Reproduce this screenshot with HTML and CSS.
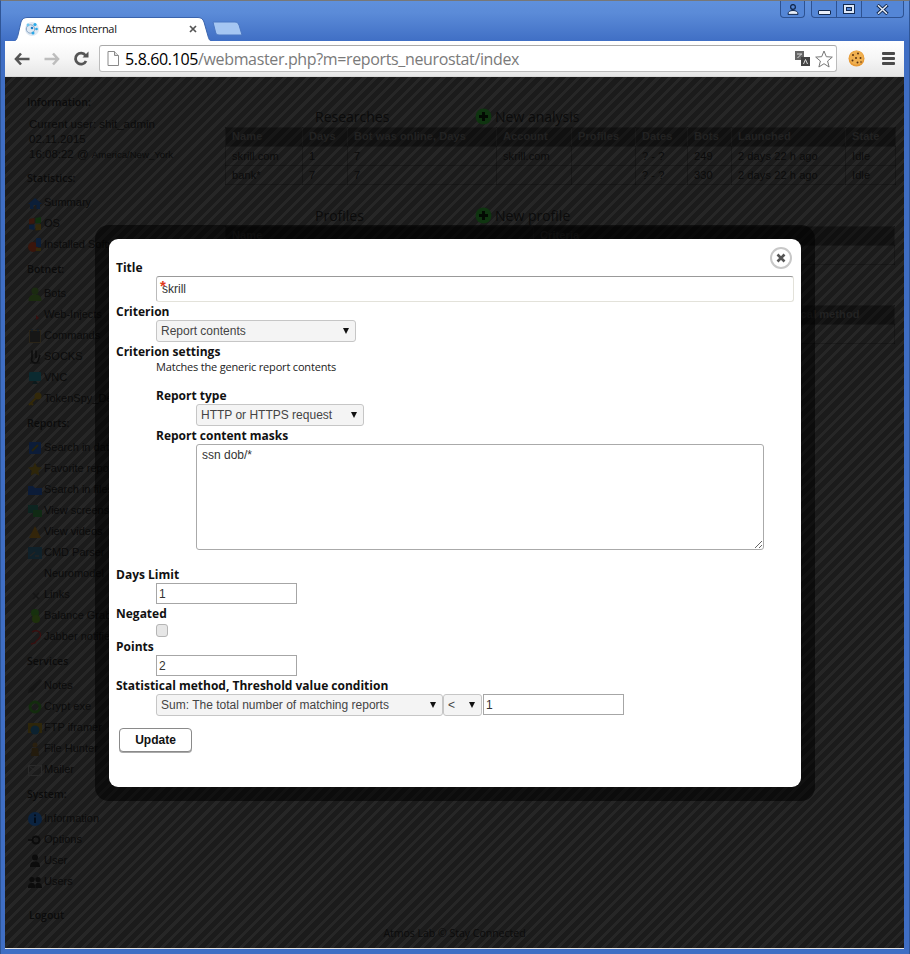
FILE: index.html
```html
<!DOCTYPE html>
<html lang="en">
<head>
<meta charset="utf-8">
<title>Atmos Internal</title>
<link rel="stylesheet" href="styles.css">
</head>
<body>
<svg class="sprite" aria-hidden="true">
  <symbol id="i-home" viewBox="0 0 16 16"><path d="M8 3 L15 9 L13 9 L13 14 L9.500 14 L9.500 10 L6.500 10 L6.500 14 L3 14 L3 9 L1 9 Z" fill="#0b1e38"/></symbol>
  <symbol id="i-os" viewBox="0 0 16 16"><path d="M2 3 L7.500 2 L7.500 7.500 L2 8 Z" fill="#3a170c"/><path d="M8.500 2 L14 1 L14 7 L8.500 7.500 Z" fill="#10300f"/><path d="M2 9 L7.500 8.500 L7.500 14 L2 13 Z" fill="#0b1e38"/><path d="M8.500 8.500 L14 8 L14 14 L8.500 14.500 Z" fill="#33290a"/></symbol>
  <symbol id="i-soft" viewBox="0 0 16 16"><circle cx="6" cy="10" r="5" fill="#3a150b"/><rect x="9" y="1" width="5" height="9" rx="1" fill="#0b1e38"/><rect x="9" y="11" width="5" height="3" fill="#33290a"/></symbol>
  <symbol id="i-bots" viewBox="0 0 16 16"><circle cx="8" cy="5" r="3.500" fill="#1a2a10"/><path d="M1.500 15 C1.500 10 4 8.500 8 8.500 C12 8.500 14.500 10 14.500 15 Z" fill="#1b2c0f"/></symbol>
  <symbol id="i-dot" viewBox="0 0 16 16"><path d="M9 8 L12 11 L9 13 Z" fill="#3a0f0f"/></symbol>
  <symbol id="i-cmds" viewBox="0 0 16 16"><rect x="2.500" y="2.500" width="11" height="12" fill="#161616" stroke="#2a2418"/><path d="M5 1 L5 4 M11 1 L11 4" stroke="#0d1d2d"/></symbol>
  <symbol id="i-socks" viewBox="0 0 16 16"><path d="M5 1.500 L5 9 A3 3 0 0 0 11 12 L13 6 M9 1.500 L9 9" fill="none" stroke="#0c0c0c" stroke-width="1.500"/><path d="M3 14 L13 14" stroke="#101010"/></symbol>
  <symbol id="i-vnc" viewBox="0 0 16 16"><rect x="2" y="2" width="12" height="9" rx="1" fill="#0b2a30"/><path d="M5 14 L11 14 L9 11 L7 11 Z" fill="#0d1a1c"/></symbol>
  <symbol id="i-key" viewBox="0 0 16 16"><circle cx="11" cy="5" r="3.500" fill="#33290a"/><path d="M8.500 7.500 L2 14 M4 12 L6 14" stroke="#33290a" stroke-width="2.200" fill="none"/></symbol>
  <symbol id="i-db" viewBox="0 0 16 16"><rect x="2" y="2" width="12" height="12" rx="1" fill="#0c1c38"/><path d="M5 11 L11 5" stroke="#26240f" stroke-width="2"/></symbol>
  <symbol id="i-star" viewBox="0 0 16 16"><path d="M8 1.500 L10 6 L15 6.500 L11.300 9.800 L12.300 14.800 L8 12.200 L3.700 14.800 L4.700 9.800 L1 6.500 L6 6 Z" fill="#2e260a"/></symbol>
  <symbol id="i-files" viewBox="0 0 16 16"><path d="M1 4 L6 4 L8 6 L15 6 L15 13 L1 13 Z" fill="#0c1c38"/></symbol>
  <symbol id="i-screens" viewBox="0 0 16 16"><rect x="1" y="2" width="10" height="8" fill="#0d2420"/><rect x="6" y="7" width="9" height="7" fill="#102a14"/></symbol>
  <symbol id="i-video" viewBox="0 0 16 16"><path d="M8 2 L14 14 L2 14 Z" fill="#33250a"/></symbol>
  <symbol id="i-cmd" viewBox="0 0 16 16"><rect x="1" y="2" width="14" height="12" fill="#10212a"/><path d="M3 11 L8 7 M8 11 L12 11" stroke="#232323" stroke-width="1.500"/></symbol>
  <symbol id="i-links" viewBox="0 0 16 16"><path d="M6 6 L12 12 M12 6 L6 12" stroke="#151515" stroke-width="1.500"/></symbol>
  <symbol id="i-money" viewBox="0 0 16 16"><circle cx="8" cy="5" r="4" fill="#16300e"/><circle cx="9" cy="11" r="4" fill="#1e300c"/></symbol>
  <symbol id="i-jabber" viewBox="0 0 16 16"><path d="M5 3 C10 0 15 3 13 8 C12 11 9 11 8 14 L4 15" fill="none" stroke="#3a0f0f" stroke-width="1.300"/></symbol>
  <symbol id="i-notes" viewBox="0 0 16 16"><path d="M13 1 L15 3 L5 14 L1 15 L2 11 Z" fill="#151515"/></symbol>
  <symbol id="i-crypt" viewBox="0 0 16 16"><circle cx="8" cy="8" r="5" fill="none" stroke="#132c0e" stroke-width="2.800"/></symbol>
  <symbol id="i-ftp" viewBox="0 0 16 16"><path d="M1 3 L15 3 L15 13 L1 13 Z" fill="#2e260a"/><circle cx="8" cy="10" r="4.500" fill="#0c2230"/></symbol>
  <symbol id="i-hunter" viewBox="0 0 16 16"><circle cx="8" cy="4" r="2.500" fill="#2a2010"/><path d="M5 7 L11 7 L12 15 L4 15 Z" fill="#231b0d"/></symbol>
  <symbol id="i-mail" viewBox="0 0 16 16"><rect x="1.500" y="3.500" width="13" height="10" fill="none" stroke="#2a2a2a"/><path d="M1.500 3.500 L8 9 L14.500 3.500" fill="none" stroke="#2a2a2a"/></symbol>
  <symbol id="i-info" viewBox="0 0 16 16"><circle cx="8" cy="8" r="7" fill="#0b2340"/><path d="M8 6.500 L8 12" stroke="#030b16" stroke-width="2"/><circle cx="8" cy="4.300" r="1" fill="#030b16"/></symbol>
  <symbol id="i-opts" viewBox="0 0 16 16"><circle cx="9" cy="8" r="3.500" fill="none" stroke="#0b0b0b" stroke-width="2"/><path d="M1 8 L5 8" stroke="#0b0b0b" stroke-width="1.500"/></symbol>
  <symbol id="i-user" viewBox="0 0 16 16"><circle cx="8" cy="4.500" r="3" fill="#0c0c0c"/><path d="M3 14 C3 10 5 8.500 8 8.500 C11 8.500 13 10 13 14 Z" fill="#0c0c0c"/></symbol>
  <symbol id="i-users" viewBox="0 0 16 16"><circle cx="5" cy="5.500" r="2.600" fill="#0c0c0c"/><circle cx="11" cy="5.500" r="2.600" fill="#0c0c0c"/><path d="M1 14 C1 10 2.500 9 5 9 C7.500 9 8 10 8 14 Z M8.500 14 C8.500 10 9 9 11 9 C13.500 9 15 10 15 14 Z" fill="#0c0c0c"/></symbol>
</svg>
<div class="window">
  <header class="titlebar">
    <div class="tabstrip">
      <div class="tab">
        <svg class="tab-shape" width="202" height="25" viewBox="0 0 202 25"><path d="M0 24.500 C4 24.500 5 22 6 18 L9 5 C10 2 12 .5 15 .5 L186 .5 C189 .5 191 2 192 5 L196 19 C197 23 198 24.500 202 24.500 Z" fill="#fff" stroke="#3a64ad" stroke-width="1"/></svg>
        <svg class="favicon" width="16" height="16" viewBox="0 0 16 16"><circle cx="8" cy="8" r="7" fill="#dfe9f3"/><circle cx="6.500" cy="8" r="4.200" fill="none" stroke="#8aa6c4"/><circle cx="11" cy="3.500" r="1.600" fill="#29a9e8"/><circle cx="4" cy="4" r="1.400" fill="#6ec6f0"/><circle cx="12.500" cy="8" r="1.300" fill="#29a9e8"/><circle cx="9" cy="12" r="1.500" fill="#29a9e8"/><circle cx="8" cy="7" r="1.300" fill="#1e7fc8"/></svg>
        <span class="tab-title">Atmos Internal</span>
        <svg class="tab-close" width="8" height="8" viewBox="0 0 8 8"><path d="M1 1 L7 7 M7 1 L1 7" stroke="#555" stroke-width="1.700"/></svg>
      </div>
      <svg class="newtab" width="31" height="15" viewBox="0 0 31 15"><path d="M1 1 L23 1 C25 1 26 2 27 4 L30 14 L7 14 C5 14 4 13 3.500 11 Z" fill="#a5c6f2" stroke="#4a76c2"/></svg>
    </div>
    <div class="winctl">
      <div class="winbtn winbtn-user"><svg width="12" height="11" viewBox="0 0 12 11"><circle cx="6" cy="3" r="2.400" fill="none" stroke="#12294f" stroke-width="1.300"/><path d="M1 10.400 C1 7.500 3 6.500 6 6.500 C9 6.500 11 7.500 11 10.400 Z" fill="#e8eef8" stroke="#12294f"/></svg></div>
      <div class="wingroup">
        <div class="winbtn winbtn-min"><span class="glyph-min"></span></div>
        <div class="winbtn winbtn-max"><span class="glyph-max"></span></div>
        <div class="winbtn winbtn-close"><svg width="13" height="11" viewBox="0 0 13 11"><path d="M1.500 1 L11.500 10 M11.500 1 L1.500 10" stroke="#12294f" stroke-width="3.400"/><path d="M2 1.300 L11 9.700 M11 1.300 L2 9.700" stroke="#e8eef8" stroke-width="1.500"/></svg></div>
      </div>
    </div>
  </header>

  <div class="toolbar">
    <svg class="tool" width="16" height="14" viewBox="0 0 16 14"><path d="M7 1.500 L2 7 L7 12.500 M2.500 7 L15.500 7" fill="none" stroke="#555" stroke-width="2.600"/></svg>
    <svg class="tool tool-fwd" width="16" height="14" viewBox="0 0 16 14"><path d="M9 1.500 L14 7 L9 12.500 M13.500 7 L0.500 7" fill="none" stroke="#bdbdbd" stroke-width="2.600"/></svg>
    <svg class="tool tool-reload" width="16" height="16" viewBox="0 0 16 16"><path d="M13 10 A5.500 5.500 0 1 1 12.500 4.500" fill="none" stroke="#555" stroke-width="2.800"/><path d="M9.500 6.500 L15.500 6.500 L15.500 0.500 Z" fill="#555"/></svg>
    <div class="omnibox">
      <svg class="pageicon" width="12" height="15" viewBox="0 0 12 15"><path d="M1 .5 L7.500 .5 L11.500 4.500 L11.500 14.500 L1 14.500 Z" fill="#fff" stroke="#8a8a8a"/><path d="M7.500 .5 L7.500 4.500 L11.500 4.500" fill="#ddd" stroke="#8a8a8a"/></svg>
      <span class="url"><span class="url-host">5.8.60.105</span>/webmaster.php?m=reports_neurostat/index</span>
      <svg class="translate" width="15" height="15" viewBox="0 0 15 15"><rect x="0" y="0" width="9" height="9" fill="#666"/><rect x="6" y="6" width="9" height="9" fill="#444"/><path d="M2 3 L7 3 M2.500 7 L6.500 3" stroke="#ddd"/><path d="M8.500 13 L10.500 8.500 L12.500 13" fill="none" stroke="#ddd"/></svg>
      <svg class="star" width="18" height="18" viewBox="0 0 18 18"><path d="M9 1 L11.300 6.700 L17.300 7.100 L12.600 11 L14.100 17 L9 13.700 L3.900 17 L5.400 11 L.7 7.100 L6.700 6.700 Z" fill="#fff" stroke="#777"/></svg>
    </div>
    <svg class="cookie" width="17" height="17" viewBox="0 0 17 17"><circle cx="8.500" cy="8.500" r="8" fill="#e79a35"/><circle cx="8.500" cy="7.800" r="7" fill="#f0b04f"/><circle cx="5" cy="5" r="1" fill="#5a3212"/><circle cx="10" cy="3.500" r="1" fill="#5a3212"/><circle cx="12.500" cy="8" r="1" fill="#5a3212"/><circle cx="8" cy="8" r="1" fill="#5a3212"/><circle cx="4.500" cy="10.500" r="1" fill="#5a3212"/><circle cx="9.500" cy="12.500" r="1" fill="#5a3212"/><circle cx="13" cy="12" r=".8" fill="#5a3212"/></svg>
    <div class="menu"><span></span><span></span><span></span></div>
  </div>

  <main class="viewport">
    <div class="page">
      <nav class="sidebar">
        <h4 class="side-h">Information:</h4>
        <div class="userinfo">
          <div>Current user: shit_admin</div>
          <div>02.11.2015</div>
          <div>16:08:22 @ <small class="tz">America/New_York</small></div>
        </div>
        <h4 class="side-h">Statistics:</h4>
        <ul class="side-list">
          <li><svg class="ic"><use href="#i-home"/></svg>Summary</li>
          <li><svg class="ic"><use href="#i-os"/></svg>OS</li>
          <li><svg class="ic"><use href="#i-soft"/></svg>Installed Software</li>
        </ul>
        <h4 class="side-h">Botnet:</h4>
        <ul class="side-list">
          <li><svg class="ic"><use href="#i-bots"/></svg>Bots</li>
          <li><svg class="ic"><use href="#i-dot"/></svg>Web-Injects</li>
          <li><svg class="ic"><use href="#i-cmds"/></svg>Commands</li>
          <li><svg class="ic"><use href="#i-socks"/></svg>SOCKS</li>
          <li><svg class="ic"><use href="#i-vnc"/></svg>VNC</li>
          <li><svg class="ic"><use href="#i-key"/></svg>TokenSpy_Dev</li>
        </ul>
        <h4 class="side-h">Reports:</h4>
        <ul class="side-list">
          <li><svg class="ic"><use href="#i-db"/></svg>Search in database</li>
          <li><svg class="ic"><use href="#i-star"/></svg>Favorite reports</li>
          <li><svg class="ic"><use href="#i-files"/></svg>Search in files</li>
          <li><svg class="ic"><use href="#i-screens"/></svg>View screens</li>
          <li><svg class="ic"><use href="#i-video"/></svg>View videos</li>
          <li><svg class="ic"><use href="#i-cmd"/></svg>CMD Parser</li>
          <li><svg class="ic"></svg>Neuromodel</li>
          <li><svg class="ic"><use href="#i-links"/></svg>Links</li>
          <li><svg class="ic"><use href="#i-money"/></svg>Balance Grabber</li>
          <li><svg class="ic"><use href="#i-jabber"/></svg>Jabber notifier</li>
        </ul>
        <h4 class="side-h">Services</h4>
        <ul class="side-list">
          <li><svg class="ic"><use href="#i-notes"/></svg>Notes</li>
          <li><svg class="ic"><use href="#i-crypt"/></svg>Crypt exe</li>
          <li><svg class="ic"><use href="#i-ftp"/></svg>FTP iframer</li>
          <li><svg class="ic"><use href="#i-hunter"/></svg>File Hunter</li>
          <li><svg class="ic"><use href="#i-mail"/></svg>Mailer</li>
        </ul>
        <h4 class="side-h">System:</h4>
        <ul class="side-list">
          <li><svg class="ic"><use href="#i-info"/></svg>Information</li>
          <li><svg class="ic"><use href="#i-opts"/></svg>Options</li>
          <li><svg class="ic"><use href="#i-user"/></svg>User</li>
          <li><svg class="ic"><use href="#i-users"/></svg>Users</li>
        </ul>
        <div class="logout">Logout</div>
      </nav>

      <section class="content">
        <div class="block-head">
          <h3 class="block-title">Researches</h3>
          <h3 class="block-new"><svg class="plus" width="17" height="17" viewBox="0 0 17 17"><circle cx="8.500" cy="8.500" r="8" fill="#0f3410"/><path d="M8.500 4 L8.500 13 M4 8.500 L13 8.500" stroke="#030a03" stroke-width="3"/></svg>New analysis</h3>
        </div>
        <table class="grid">
          <colgroup><col class="c1"><col class="c2"><col class="c3"><col class="c4"><col class="c5"><col class="c6"><col class="c7"><col class="c8"><col class="c9"></colgroup>
          <thead><tr><th>Name</th><th>Days</th><th>Bot was online, Days</th><th>Account</th><th>Profiles</th><th>Dates</th><th>Bots</th><th>Launched</th><th>State</th></tr></thead>
          <tbody>
            <tr><td>skrill.com</td><td>1</td><td>7</td><td>skrill.com</td><td></td><td>? - ?</td><td>249</td><td>2 days 22 h ago</td><td>Idle</td></tr>
            <tr><td>bank*</td><td>7</td><td>7</td><td></td><td></td><td>? - ?</td><td>330</td><td>2 days 22 h ago</td><td>Idle</td></tr>
          </tbody>
        </table>
        <div class="block-head block-head-2">
          <h3 class="block-title">Profiles</h3>
          <h3 class="block-new"><svg class="plus" width="17" height="17" viewBox="0 0 17 17"><circle cx="8.500" cy="8.500" r="8" fill="#0f3410"/><path d="M8.500 4 L8.500 13 M4 8.500 L13 8.500" stroke="#030a03" stroke-width="3"/></svg>New profile</h3>
        </div>
        <table class="grid">
          <colgroup><col class="p1"><col></colgroup>
          <thead><tr><th>Name</th><th>Criteria</th></tr></thead>
          <tbody><tr><td></td><td></td></tr></tbody>
        </table>
        <table class="grid grid-method">
          <colgroup><col class="m1"><col></colgroup>
          <thead><tr><th></th><th>Statistical method</th></tr></thead>
          <tbody><tr><td></td><td class="m-val">1</td></tr></tbody>
        </table>
      </section>
    </div>
    <footer class="pagefoot">Atmos Lab © Stay Connected</footer>

    <div class="modal-shade">
      <div class="modal">
        <button class="modal-close" type="button" aria-label="Close"><svg width="10" height="10" viewBox="0 0 10 10"><path d="M1.500 1.500 L8.500 8.500 M8.500 1.500 L1.500 8.500" stroke="#555" stroke-width="2.600"/></svg></button>
        <form class="form">
          <label class="lbl">Title</label>
          <div class="field field-title"><input class="text text-wide" type="text" value="skrill"><span class="req">*</span></div>
          <label class="lbl">Criterion</label>
          <div class="field"><span class="sel sel-criterion"><select><option>Report contents</option></select></span></div>
          <label class="lbl">Criterion settings</label>
          <div class="sub">
            <p class="hint">Matches the generic report contents</p>
            <label class="lbl">Report type</label>
            <div class="field"><span class="sel sel-type"><select><option>HTTP or HTTPS request</option></select></span></div>
            <label class="lbl">Report content masks</label>
            <div class="field field-masks"><textarea class="masks">ssn dob/*</textarea></div>
          </div>
          <label class="lbl lbl-days">Days Limit</label>
          <div class="field"><input class="text text-num" type="text" value="1"></div>
          <label class="lbl">Negated</label>
          <div class="field field-check"><span class="check"></span></div>
          <label class="lbl">Points</label>
          <div class="field"><input class="text text-num" type="text" value="2"></div>
          <label class="lbl">Statistical method, Threshold value condition</label>
          <div class="field field-row">
            <span class="sel sel-method"><select><option>Sum: The total number of matching reports</option></select></span>
            <span class="sel sel-op"><select><option>&lt;</option></select></span>
            <input class="text text-num" type="text" value="1">
          </div>
          <button class="update" type="button">Update</button>
        </form>
      </div>
    </div>
  </main>
</div>
</body>
</html>
```
FILE: styles.css
```css
* { box-sizing: border-box; }
html, body { margin: 0; padding: 0; }
body { width: 910px; height: 954px; background: #fff; overflow: hidden; font-family: "Open Sans", "Liberation Sans", sans-serif; }
.sprite { display: none; }

.window {
  width: 910px; height: 954px;
  display: flex; flex-direction: column;
  padding: 0 5px 5px 5px;
  background: linear-gradient(#5f90dc 0, #5b8bd8 12px, #3f6ec4 41px, #3f6ec4 100%);
  border-top: 1px solid #777;
  border-left: 1px solid #2f5596;
  border-right: 1px solid #2f5596;
}

.titlebar { height: 40px; position: relative; flex: none; }
.tabstrip { display: flex; align-items: flex-end; height: 40px; margin-left: 6px; }
.tab { width: 200px; height: 25px; position: relative; display: flex; align-items: center; padding: 0 0 2px 12px; margin-bottom: -1px; }
.tab-shape { position: absolute; left: 0; top: 0; }
.favicon { position: relative; flex: none; margin-right: 5px; }
.tab-title { position: relative; font-size: 11px; letter-spacing: -.3px; color: #111; flex: 1; line-height: 18px; white-space: nowrap; }
.tab-close { position: relative; margin-right: 15px; flex: none; }
.newtab { margin: 0 0 5px 0; }

.winctl { position: absolute; top: 0; right: 0; display: flex; gap: 6px; }
.wingroup { display: flex; background: #5486d6; border: 1px solid #2d5292; border-top: 0; border-radius: 0 0 4px 4px; height: 17px; }
.winbtn { display: flex; align-items: center; justify-content: center; height: 16px; }
.winbtn-user { width: 25px; height: 17px; background: #5486d6; border: 1px solid #2d5292; border-top: 0; border-radius: 0 0 4px 4px; }
.winbtn-min { width: 25px; border-right: 1px solid #2d5292; }
.winbtn-max { width: 25px; border-right: 1px solid #2d5292; }
.winbtn-close { width: 41px; }
.glyph-min { display: block; width: 13px; height: 5px; margin-top: 6px; background: #e8eef8; border: 1px solid #12294f; border-radius: 1px; }
.glyph-max { display: block; width: 10px; height: 8px; border: 2px solid #dde8f8; box-shadow: 0 0 0 1px #12294f, inset 0 0 0 1px #12294f; }

.toolbar {
  height: 36px; flex: none; display: flex; align-items: center;
  background: linear-gradient(#fff 0, #f6f6f6 50%, #e6e6e6 100%);
  border-bottom: 1px solid #d8d8d8;
  padding: 0 0 0 9px;
  margin-left: -1px;
  position: relative;
}
.tool { flex: none; }
.tool-fwd { margin-left: 14px; }
.tool-reload { margin-left: 13px; }
.omnibox {
  width: 738px; height: 27px; margin-left: 10px; flex: none;
  display: flex; align-items: center; padding: 0 3px 0 7px;
  background: #fff; border: 1px solid #bcbcbc; border-top-color: #a9a9a9; border-radius: 3px;
}
.pageicon { flex: none; }
.url { font-size: 16px; color: #7a7a7a; margin-left: 6px; flex: 1; white-space: nowrap; letter-spacing: -.36px; }
.url-host { color: #000; }
.translate { flex: none; margin-right: 5px; }
.star { flex: none; }
.cookie { flex: none; margin-left: 11px; }
.menu { flex: none; width: 13px; margin-left: 17px; display: flex; flex-direction: column; gap: 2px; }
.menu span { display: block; height: 3px; background: #4a4a4a; border-radius: 1px; }

.viewport {
  flex: 1; position: relative; overflow: hidden;
  margin-left: -1px;
  border-bottom: 1px solid #e4e4e4;
  background-color: #1b1b1b;
  background-image: repeating-linear-gradient(135deg, #1b1b1b 0, #1b1b1b 5px, #262626 5px, #262626 8px);
  color: #0b0b0b;
  font-size: 11px;
}
.page { display: flex; padding-top: 18px; }

.sidebar { width: 220px; flex: none; padding-left: 22px; font-family: "Liberation Sans", sans-serif; font-size: 11px; }
.side-h { margin: 0; font-family: "Open Sans", sans-serif; font-size: 10.500px; font-weight: 600; line-height: 14px; height: 14px; white-space: nowrap; }
.userinfo { padding: 8px 0 9px 2px; line-height: 14.800px; font-size: 11.500px; white-space: nowrap; }
.tz { font-size: 9.600px; }
.side-list { list-style: none; margin: 0; padding: 7px 0 7px 0; }
.side-list li { height: 21px; line-height: 21px; display: flex; align-items: center; white-space: nowrap; }
.ic { display: block; width: 16px; height: 16px; margin-right: 1px; flex: none; }
.logout { padding: 0 0 0 2px; margin-top: 9px; font-family: "Open Sans", sans-serif; font-weight: 600; font-size: 10.500px; line-height: 14px; }

.content { flex: none; width: 670px; padding-top: 11px; }
.block-head { display: flex; height: 21px; align-items: center; }
.block-head-2 { margin-top: 20px; }
.block-title { margin: 0; width: 250px; padding-left: 90px; font-size: 14px; font-weight: 400; }
.block-new { margin: 0; display: flex; align-items: center; font-size: 14px; font-weight: 400; }
.plus { margin-right: 3px; }

.grid { table-layout: fixed; border-collapse: collapse; width: 670px; font-family: "Liberation Sans", sans-serif; font-size: 11px; letter-spacing: .1px; }
.c1 { width: 77px; } .c2 { width: 45px; } .c3 { width: 149px; } .c4 { width: 75px; } .c5 { width: 64px; } .c6 { width: 52px; } .c7 { width: 44px; } .c8 { width: 114px; } .c9 { width: 50px; }
.grid th, .grid td { height: 19px; padding: 0 6px; border: 1px solid rgba(0,0,0,.22); text-align: left; line-height: 16px; white-space: nowrap; overflow: hidden; }
.grid th { background: rgba(0,0,0,.38); color: #222; font-weight: 700; padding-bottom: 2px; }
.p1 { width: 308px; }
.grid-method { margin-top: 40px; }
.m1 { width: 531px; }
.m-val { padding-left: 47px; }

.pagefoot { position: absolute; left: 0; right: 0; top: 849px; text-align: center; font-size: 10.500px; }

.modal-shade { position: absolute; left: 90px; top: 148px; width: 720px; height: 576px; padding: 14px; background: rgba(0,0,0,.55); border-radius: 14px; }
.modal { position: relative; width: 692px; height: 548px; background: #fff; border-radius: 9px; color: #000; }
.modal-close {
  position: absolute; right: 9px; top: 8px; width: 22px; height: 22px; padding: 0;
  display: flex; align-items: center; justify-content: center;
  background: #fff; border: 2px solid #c8c8c8; border-radius: 50%;
}
.form { padding: 20px 0 0 7px; display: flex; flex-direction: column; align-items: flex-start; }
.lbl { display: block; height: 17px; padding-top: 1px; line-height: 16px; font-size: 12px; font-weight: 700; color: #111; white-space: nowrap; }
.field { margin-left: 40px; margin-bottom: 1px; display: flex; }
.field-title { position: relative; }
.text { font: 12px "Liberation Sans", Arial, sans-serif; color: #333; background: #fff; padding: 1px 2px; height: 21px; border: 1px solid #a6a6a6; border-radius: 0; }
.text-wide { width: 638px; height: 26px; padding: 0 5px; border-radius: 3px; border-color: #e3e2da; border-top-color: #999; border-left-color: #bbb; }
.text-num { width: 141px; }
.req { position: absolute; left: 4px; top: 1px; color: #e03a1c; font: 700 15px "Liberation Sans", sans-serif; }
.sel { display: inline-block; position: relative; height: 22px; flex: none; }
.sel select {
  appearance: none; -webkit-appearance: none; display: block; width: 100%; height: 100%;
  font: 12px "Liberation Sans", Arial, sans-serif; color: #444; background: #f4f4f4;
  border: 1px solid #c6c6c6; border-radius: 3px; padding: 0 16px 0 4px; margin: 0;
}
.sel::after { content: ""; position: absolute; right: 7px; top: 8px; border-style: solid; border-width: 6px 3.500px 0; border-color: #111 transparent transparent; }
.sel-criterion { width: 200px; }
.sel-type { width: 168px; }
.sel-method { width: 287px; }
.sel-op { width: 39px; margin-right: 1px; }
.sub { margin-left: 40px; display: flex; flex-direction: column; align-items: flex-start; }
.sub .field { margin-left: 40px; }
.sub .field-masks { margin-bottom: 0; }
.hint { margin: 0 0 12px 0; height: 15px; line-height: 14px; font-size: 11px; color: #222; letter-spacing: -.18px; white-space: nowrap; }
.masks { display: block; width: 568px; height: 106px; font: 12px "Liberation Sans", Arial, sans-serif; color: #333; padding: 3px 5px; border: 1px solid #aaa; border-radius: 3px; margin: 0; }
.lbl-days { margin-top: 16px; }
.field-check { height: 15px; align-items: flex-start; padding-top: 2px; }
.check { display: block; width: 12px; height: 13px; background: #e6e6e6; border: 1px solid #b5b5b5; border-radius: 3px; }
.field-row { align-items: flex-start; }
.update {
  margin: 11px 0 0 3px; width: 73px; height: 24px; padding: 0;
  background: #fff; border: 1px solid #8a8a8a; border-radius: 4px; box-shadow: 0 1px 0 #aaa;
  font: 700 12px "Liberation Sans", sans-serif; color: #111;
}
```
